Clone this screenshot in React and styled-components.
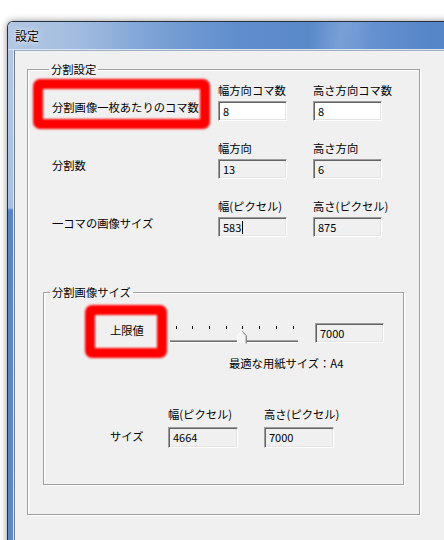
import React from "react";
import styled, { createGlobalStyle } from "styled-components";

const GlobalStyle = createGlobalStyle`
  html, body {
    margin: 0;
    padding: 0;
    background: #fff;
    overflow: hidden;
  }
  body {
    font-family: "Noto Sans CJK JP", "Liberation Sans", sans-serif;
    color: #000;
  }
`;

const Desktop = styled.div`
  width: 444px;
  height: 540px;
  overflow: hidden;
  box-sizing: border-box;
  padding: 21px 0 0 7px;
  background: #fff;
`;

const Window = styled.div`
  width: 470px;
  height: 540px;
  display: flex;
  flex-direction: column;
  border: 1px solid #26313f;
  border-right: none;
  border-bottom: none;
  border-radius: 6px 0 0 0;
  box-shadow: 0 0 7px rgba(0, 0, 0, 0.45);
  overflow: hidden;
`;

const TitleBar = styled.div`
  height: 27px;
  display: flex;
  align-items: center;
  padding-left: 7px;
  border-bottom: 1px solid #d6e3f3;
  background:
    linear-gradient(100deg, rgba(255,255,255,0) 0, rgba(255,255,255,0) 300px, rgba(255,255,255,0.14) 330px, rgba(255,255,255,0) 360px),
    linear-gradient(to right, #b3c7e2 0, #a2bcdf 70px, #7aa0d5 150px, #5f8dcd 230px, #5a89ca 300px, #6894d1 350px, #5786c8 420px);
  font-size: 12px;
  line-height: 16px;
  text-shadow: 0 0 6px rgba(255, 255, 255, 0.95), 0 0 2px rgba(255, 255, 255, 0.9);
`;

const Body = styled.div`
  flex: 1;
  display: flex;
`;

const SideFrame = styled.div`
  width: 5px;
  border-right: 1px solid #dce7f5;
  background: linear-gradient(to bottom, #b5c8e2 0, #a8c1e3 158px, #5785c8 160px, #5a88c9 100%);
`;

const Client = styled.div`
  flex: 1;
  background: #f0f0f0;
  border-left: 1px solid #6f7d90;
  border-top: 1px solid #a3b0c2;
  padding: 10px 0 0 12px;
`;

const Group = styled.fieldset`
  margin: ${(p) => (p.$inner ? "47px 0 0 0" : "0")};
  padding: ${(p) => (p.$inner ? "0 0 36px 0" : "0 15px 29px 15px")};
  width: ${(p) => (p.$inner ? "100%" : "393px")};
  box-sizing: border-box;
  min-inline-size: 0;
  border: 1px solid #a0a0a0;
  box-shadow: 1px 1px 0 #fff, inset 1px 1px 0 #fff;
`;

const Legend = styled.legend`
  margin-left: 6px;
  padding: 0 2px;
  font-size: 11.3px;
  line-height: 16px;
`;

const Row = styled.div`
  display: grid;
  grid-template-columns: 166px 95px 69px;
  align-items: end;
  padding-left: 9px;
  margin-top: ${(p) => p.$top}px;
`;

const RowLabel = styled.div`
  position: relative;
  font-size: 11.3px;
  line-height: 14px;
  margin-bottom: ${(p) => p.$mb ?? 7}px;
  white-space: nowrap;
`;

const Highlight = styled.span`
  position: absolute;
  left: ${(p) => p.$x}px;
  top: ${(p) => p.$y}px;
  width: ${(p) => p.$w}px;
  height: ${(p) => p.$h}px;
  box-sizing: border-box;
  border: 10px solid #ff0000;
  border-radius: 7px;
  filter: blur(1.3px);
  pointer-events: none;
`;

const FieldGroup = styled.div`
  display: flex;
  flex-direction: column;
`;

const Caption = styled.div`
  font-size: 11.3px;
  line-height: 14px;
  margin-bottom: ${(p) => p.$gap ?? 4}px;
  white-space: nowrap;
`;

const Field = styled.div`
  width: ${(p) => p.$w ?? 69}px;
  height: ${(p) => p.$h ?? 20}px;
  box-sizing: border-box;
  padding-left: 4px;
  border: 1px solid;
  border-color: #9c9c9c #fff #fff #9c9c9c;
  box-shadow: inset 1px 1px 0 #646464, inset -1px -1px 0 #e3e3e3;
  background: ${(p) => (p.$editable ? "#fff" : "#f0f0f0")};
  font-size: 11px;
  line-height: ${(p) => (p.$h ?? 20) - 2}px;
  display: flex;
  align-items: center;
`;

const Caret = styled.span`
  display: inline-block;
  width: 1px;
  height: 13px;
  margin-left: 1px;
  background: #000;
`;

const SliderRow = styled.div`
  display: flex;
  align-items: flex-start;
  padding: 23px 0 0 66px;
`;

const SliderLabel = styled.div`
  position: relative;
  width: 60px;
  font-size: 11.3px;
  line-height: 14px;
`;

const Track = styled.svg`
  display: block;
  width: 128px;
  height: 20px;
  margin: 1px 17px 0 0;
`;

const Note = styled.div`
  margin: 12px 0 0 185px;
  font-size: 11.3px;
  line-height: 14px;
  white-space: nowrap;
`;

const SizeRow = styled.div`
  display: grid;
  grid-template-columns: 58px 96px 70px;
  align-items: end;
  padding-left: 66px;
  margin-top: 37px;
`;

const ticks = [6, 22, 39, 56, 72, 89, 106, 123];

const Slider = () => (
  <Track viewBox="0 0 128 20">
    {ticks.map((x) => (
      <rect key={x} x={x} y="2" width="1" height="3" fill="#000" />
    ))}
    <rect x="0" y="16" width="128" height="1" fill="#a0a0a0" />
    <rect x="0" y="17" width="128" height="1" fill="#707070" />
    <rect x="0" y="18" width="128" height="1" fill="#fff" />
    <path d="M67 19.5 V11.5 L72 6.5 L77 11.5 V19.5 Z" fill="#f4f4f4" />
    <path d="M67.5 19.5 V11.5 L72 7" fill="none" stroke="#fff" />
    <path d="M72 7 L76.5 11.5 V19.5" fill="none" stroke="#8a8a8a" />
    <path d="M73 9 L75.5 11.8 V19.5" fill="none" stroke="#c8c8c8" />
  </Track>
);

const App = () => {
  return (
    <Desktop>
      <GlobalStyle />
      <Window>
        <TitleBar>設定</TitleBar>
        <Body>
          <SideFrame />
          <Client>
            <Group>
              <Legend>分割設定</Legend>
              <Row $top={6}>
                <RowLabel>
                  <Highlight $x={-19} $y={-21} $w={177} $h={50} />
                  分割画像一枚あたりのコマ数
                </RowLabel>
                <FieldGroup>
                  <Caption>幅方向コマ数</Caption>
                  <Field $editable>8</Field>
                </FieldGroup>
                <FieldGroup>
                  <Caption>高さ方向コマ数</Caption>
                  <Field $editable>8</Field>
                </FieldGroup>
              </Row>
              <Row $top={20}>
                <RowLabel>分割数</RowLabel>
                <FieldGroup>
                  <Caption>幅方向</Caption>
                  <Field>13</Field>
                </FieldGroup>
                <FieldGroup>
                  <Caption>高さ方向</Caption>
                  <Field>6</Field>
                </FieldGroup>
              </Row>
              <Row $top={20}>
                <RowLabel>一コマの画像サイズ</RowLabel>
                <FieldGroup>
                  <Caption>幅(ピクセル)</Caption>
                  <Field>
                    583
                    <Caret />
                  </Field>
                </FieldGroup>
                <FieldGroup>
                  <Caption>高さ(ピクセル)</Caption>
                  <Field>875</Field>
                </FieldGroup>
              </Row>

              <Group $inner>
                <Legend>分割画像サイズ</Legend>
                <SliderRow>
                  <SliderLabel>
                    <Highlight $x={-25} $y={-18} $w={82} $h={53} />
                    上限値
                  </SliderLabel>
                  <Slider />
                  <Field>7000</Field>
                </SliderRow>
                <Note>最適な用紙サイズ：A4</Note>
                <SizeRow>
                  <RowLabel $mb={5}>サイズ</RowLabel>
                  <FieldGroup>
                    <Caption $gap={6}>幅(ピクセル)</Caption>
                    <Field $w={70} $h={21}>4664</Field>
                  </FieldGroup>
                  <FieldGroup>
                    <Caption $gap={6}>高さ(ピクセル)</Caption>
                    <Field $w={70} $h={21}>7000</Field>
                  </FieldGroup>
                </SizeRow>
              </Group>
            </Group>
          </Client>
        </Body>
      </Window>
    </Desktop>
  );
};

export default App;
